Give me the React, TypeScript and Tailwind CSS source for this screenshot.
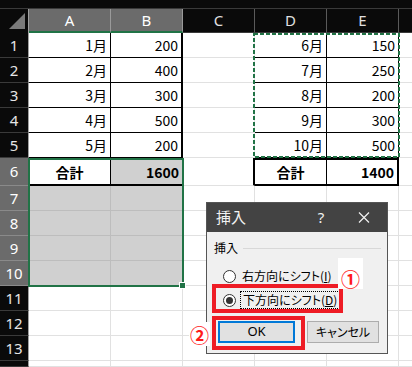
import React from "react";

const jp = "font-['Noto_Sans_CJK_JP',sans-serif] [font-feature-settings:'palt']";
const ui = "font-['Noto_Sans','DejaVu_Sans',sans-serif]";

const colW = ["w-[82px]", "w-[72px]", "w-[72px]", "w-[72px]", "w-[72px]", "w-[13px]"];
const colNames = ["A", "B", "C", "D", "E", ""];
const rows = [1, 2, 3, 4, 5, 6, 7, 8, 9, 10, 11, 12, 13, 14];

const data: Record<number, string[]> = {
  1: ["1月", "200", "", "6月", "150", ""],
  2: ["2月", "400", "", "7月", "250", ""],
  3: ["3月", "300", "", "8月", "200", ""],
  4: ["4月", "500", "", "9月", "300", ""],
  5: ["5月", "200", "", "10月", "500", ""],
  6: ["合計", "1600", "", "合計", "1400", ""],
};

function rowHeight(r: number) {
  if (r === 6) return "h-[28px]";
  if (r === 14) return "h-[6px]";
  return "h-[25px]";
}

function cellClass(r: number, c: number) {
  if (c === 5) return "bg-white border-b border-[#e1e1e1]";
  if (r <= 5 && c === 1) return "bg-white border-r-2 border-b border-black";
  if (r <= 5 && c !== 2) return "bg-white border-r border-b border-black";
  if (r === 6 && c === 0) return "bg-white border-r border-b-2 border-black";
  if (r === 6 && c === 1) return "bg-[#d0d0d0] border-r border-b-2 border-black";
  if (r === 6 && c === 2) return "bg-white border-r-2 border-b border-r-black border-b-[#e1e1e1]";
  if (r === 6 && c === 3) return "bg-white border-t-2 border-r border-b-2 border-black";
  if (r === 6 && c === 4) return "bg-white border-t-2 border-r-2 border-b-2 border-black";
  if (r >= 7 && r <= 10 && c <= 1) return "bg-[#d0d0d0] border-r border-b border-[#bdbdbd]";
  return "bg-white border-r border-b border-[#e1e1e1]";
}

function RowHeader({ r }: { r: number }) {
  const sel = r >= 6 && r <= 10;
  return (
    <div
      className={`w-[29px] shrink-0 flex items-center justify-center border-r border-b border-r-[#a0a0a0] text-[15px] ${ui} ${
        sel ? "bg-[#6b6b6b] text-white border-b-[#8a8a8a]" : "bg-[#0a0a0a] text-[#e6e6e6] border-b-[#3a3a3a]"
      }`}
    >
      {r === 14 ? "" : r}
    </div>
  );
}

function Sheet() {
  return (
    <div className="flex flex-col">
      <div className="h-[9px] bg-[#0a0a0a] border-b border-[#3a3a3a]" />
      <div className="flex h-[24px]">
        <div className="w-[29px] shrink-0 bg-[#0a0a0a] border-r border-[#a0a0a0]">
          <svg width="28" height="24" viewBox="0 0 28 24">
            <polygon points="25,4 25,20 9,20" fill="#7a7a7a" />
          </svg>
        </div>
        {colNames.map((n, c) => (
          <div
            key={c}
            className={`${colW[c]} shrink-0 flex items-center justify-center text-[15px] ${ui} ${
              c <= 1
                ? "bg-[#6b6b6b] text-white border-r border-r-[#9a9a9a] border-b-2 border-b-[#217346]"
                : c === 5
                ? "bg-[#0a0a0a] border-b border-b-[#3a3a3a]"
                : "bg-[#0a0a0a] text-[#e0e0e0] border-r border-r-[#5a5a5a] border-b border-b-[#3a3a3a]"
            }`}
          >
            {n}
          </div>
        ))}
      </div>
      {rows.map((r) => (
        <div key={r} className={`flex ${rowHeight(r)}`}>
          <RowHeader r={r} />
          {colW.map((w, c) => {
            const t = data[r]?.[c] ?? "";
            const center = t === "合計";
            return (
              <div
                key={c}
                className={`${w} shrink-0 flex items-end pb-[1px] text-[14px] text-black ${jp} ${cellClass(r, c)} ${
                  center ? "justify-center font-bold" : "justify-end pr-[3px]"
                } ${r === 6 ? "font-bold" : ""}`}
              >
                {t}
              </div>
            );
          })}
        </div>
      ))}
    </div>
  );
}

function Radio({ on }: { on?: boolean }) {
  return (
    <div className="w-[13px] h-[13px] rounded-full border border-[#333] bg-white flex items-center justify-center shrink-0">
      {on && <div className="w-[7px] h-[7px] rounded-full bg-[#333]" />}
    </div>
  );
}

function InsertDialog() {
  return (
    <div className={`absolute left-[206px] top-[202px] w-[182px] h-[152px] border border-[#555] bg-[#f0f0f0] flex flex-col ${jp}`}>
      <div className="h-[29px] bg-[#434343] flex items-center text-[#f2f2f2]">
        <span className="pl-[9px] text-[15px] flex-1">挿入</span>
        <span className={`w-[40px] text-center text-[15px] ${ui}`}>?</span>
        <span className="w-[46px] flex justify-center">
          <svg width="12" height="11" viewBox="0 0 12 11">
            <path d="M1 0.5 L11 10.5 M11 0.5 L1 10.5" stroke="#f2f2f2" strokeWidth="1.2" />
          </svg>
        </span>
      </div>
      <div className="flex flex-col pl-[7px] pr-[6px] pt-[6px] text-[12px] text-black">
        <div className="flex items-center h-[20px]">
          <span>挿入</span>
          <div className="flex-1 h-px bg-[#d8d8d8] ml-[5px]" />
        </div>
        <div className="flex items-center h-[20px] mt-[8px] ml-[9px] gap-[6px]">
          <Radio />
          <span>
            右方向にシフト(<span className="underline">I</span>)
          </span>
        </div>
        <div className="flex items-center h-[20px] mt-[4px] ml-[9px] gap-[4px]">
          <Radio on />
          <span className="h-[18px] flex items-center px-[2px] border border-dotted border-black">
            下方向にシフト(<span className="underline">D</span>)
          </span>
        </div>
        <div className="flex mt-[11px] ml-[4px] gap-[12px]">
          <div className={`w-[77px] h-[22px] flex items-center justify-center bg-[#e1e1e1] border-2 border-[#0078d7] text-[13px] ${ui}`}>
            OK
          </div>
          <div className="w-[72px] h-[22px] flex items-center justify-center bg-[#e1e1e1] border border-[#adadad]">
            キャンセル
          </div>
        </div>
      </div>
    </div>
  );
}

export default function App() {
  return (
    <div className="relative w-[412px] h-[367px] overflow-hidden bg-white">
      <Sheet />
      {/* selection A6:B10 */}
      <div className="absolute left-[28px] top-[158px] w-[156px] h-[129px] border-2 border-[#217346]" />
      <div className="absolute left-[179px] top-[282px] w-[7px] h-[7px] bg-[#217346] border border-white" />
      {/* copy marquee D1:E5 */}
      <svg className="absolute left-[253px] top-[33px]" width="147" height="125" viewBox="0 0 147 125">
        <rect x="1" y="1" width="145" height="123" fill="none" stroke="#217346" strokeWidth="2" strokeDasharray="4 2" />
      </svg>
      <InsertDialog />
      <div className="absolute left-[212px] top-[284px] w-[131px] h-[29px] border-4 border-[#ee1c25]" />
      <div className="absolute left-[212px] top-[316px] w-[93px] h-[34px] border-4 border-[#ee1c25]" />
      <div className={`absolute left-[338px] top-[258px] w-[25px] h-[31px] bg-white flex items-end justify-center pb-[1px] text-[19px] font-bold text-[#ff1a1a] leading-none ${jp}`}>
        ①
      </div>
      <div className={`absolute left-[189px] top-[322px] w-[21px] h-[24px] bg-white flex items-center justify-center text-[19px] font-bold text-[#ff1a1a] leading-none ${jp}`}>
        ②
      </div>
    </div>
  );
}
